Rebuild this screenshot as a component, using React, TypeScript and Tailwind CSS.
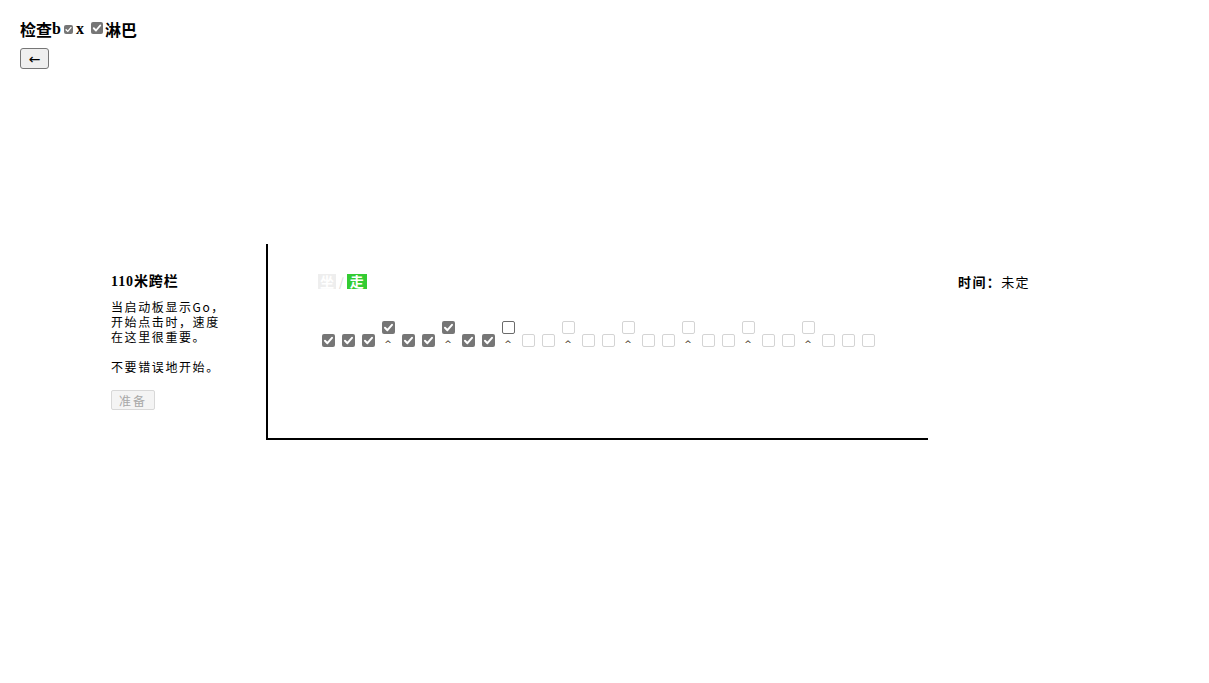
import React from 'react';

type BoxState = 'checked' | 'open' | 'disabled';

function Box({ state, size = 13 }: { state: BoxState; size?: number }) {
  if (state === 'checked') {
    return (
      <span
        className="inline-flex items-center justify-center rounded-[2px] bg-[#767676] shrink-0"
        style={{ width: size, height: size }}
      >
        <svg viewBox="0 0 13 13" width={size} height={size}>
          <path d="M3 6.8 L5.4 9.2 L10 3.8" fill="none" stroke="#fff" strokeWidth="2" strokeLinecap="round" strokeLinejoin="round" />
        </svg>
      </span>
    );
  }
  return (
    <span
      className={
        state === 'open'
          ? 'inline-block rounded-[2px] border border-[#6b6b6b] bg-white shrink-0'
          : 'inline-block rounded-[2px] border border-[#d4d4d4] bg-white shrink-0'
      }
      style={{ width: size, height: size }}
    />
  );
}

const COLS = 28;
const PROGRESS = 9; // columns the runner has passed

export default function App() {
  const columns = Array.from({ length: COLS }, (_, i) => i);

  return (
    <div className="pt-[18px] px-[20px] text-black font-['Liberation_Serif','Noto_Sans_CJK_SC',serif]">
      <h1 className="flex items-center text-[16px] leading-[20px] font-bold">
        <span className="font-['Noto_Sans_CJK_SC',sans-serif]">检查</span>
        <span>b</span>
        <span className="mx-[3px] mt-[1px]">
          <Box state="checked" size={9} />
        </span>
        <span>x</span>
        <span className="ml-[7px] mr-[2px]">
          <Box state="checked" size={12} />
        </span>
        <span className="font-['Noto_Sans_CJK_SC',sans-serif]">淋巴</span>
      </h1>

      <button className="mt-[9px] w-[29px] h-[21px] flex items-center justify-center rounded-[3px] border border-[#767676] bg-[#efefef] text-[14px] leading-none font-['DejaVu_Sans',sans-serif]">
        ←
      </button>

      {/* race area */}
      <div className="mt-[175px] ml-[91px] flex items-start text-[12px] leading-[15px] tracking-[1.6px] font-['Noto_Sans_CJK_SC',sans-serif]">
        <div className="w-[155px] pt-[30px]">
          <div className="font-bold text-[14px] tracking-[0.9px] font-['Liberation_Serif','Noto_Sans_CJK_SC',serif]">110米跨栏</div>
          <p className="mt-[10px] whitespace-nowrap">
            当启动板显示Go，
            <br />
            开始点击时，速度
            <br />
            在这里很重要。
          </p>
          <p className="mt-[15px] whitespace-nowrap">不要错误地开始。</p>
          <button
            disabled
            className="mt-[16px] w-[44px] h-[20px] flex items-center justify-center rounded-[2px] border border-[#d8d8d8] bg-[#f4f4f4] text-[#a8a8a8] text-[12px] tracking-[2px]"
          >
            准备
          </button>
        </div>

        <div className="w-[662px] h-[196px] border-l-2 border-b-2 border-black pl-[50px] pt-[30px]">
          <div className="flex items-center h-[15px] text-[14px] font-bold tracking-normal">
            <span className="bg-[#eeeeee] text-white px-[2px] h-[15px] leading-[15px]">坐</span>
            <span className="text-[#d8d8d8] mx-[3px] font-normal text-[12px]">/</span>
            <span className="bg-[#33cc33] text-white px-[3px] h-[15px] leading-[15px]">走</span>
          </div>

          <div className="mt-[32px] flex">
            {columns.map((i) => {
              const hurdle = i % 3 === 0 && i > 0 && i < COLS - 2;
              const state: BoxState = i < PROGRESS ? 'checked' : i === PROGRESS ? 'open' : 'disabled';
              return (
                <div key={i} className="w-[20px] h-[26px] flex flex-col items-center">
                  {hurdle ? (
                    <>
                      <Box state={state} />
                      <span className="mt-[6px] text-[9px] leading-[9px] text-[#3a2a10] font-['DejaVu_Sans',sans-serif] tracking-normal">^</span>
                    </>
                  ) : (
                    <>
                      <span className="h-[13px]" />
                      <Box state={i < PROGRESS ? 'checked' : 'disabled'} />
                    </>
                  )}
                </div>
              );
            })}
          </div>
        </div>

        <div className="ml-[30px] pt-[30px] whitespace-nowrap text-[13px] tracking-[1.4px]">
          <span className="font-bold">时间：</span>
          <span>未定</span>
        </div>
      </div>
    </div>
  );
}
